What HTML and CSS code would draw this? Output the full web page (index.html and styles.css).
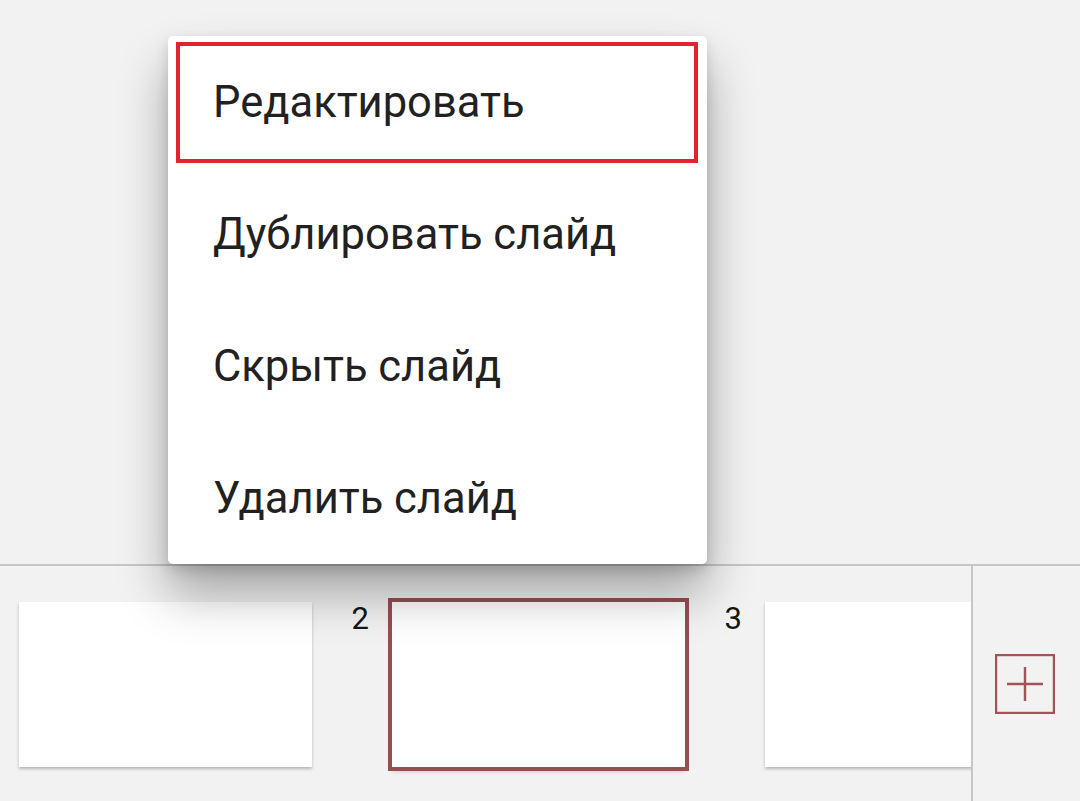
FILE: index.html
```html
<!DOCTYPE html>
<html lang="ru">
<head>
<meta charset="utf-8">
<link rel="stylesheet" href="styles.css">
</head>
<body>
<div class="screen">
  <div class="canvas">
    <ul class="menu">
      <li class="menu-item is-focused">Редактировать</li>
      <li class="menu-item">Дублировать слайд</li>
      <li class="menu-item">Скрыть слайд</li>
      <li class="menu-item">Удалить слайд</li>
    </ul>
  </div>
  <div class="bottom-bar">
    <div class="strip">
      <div class="thumb"></div>
      <div class="num">2</div>
      <div class="thumb is-selected"></div>
      <div class="num">3</div>
      <div class="thumb"></div>
    </div>
    <div class="add-panel">
      <div class="add-btn">
        <svg width="60" height="60" viewBox="0 0 60 60">
          <rect x="1.1" y="1.1" width="57.8" height="57.8" fill="none" stroke="#a05457" stroke-width="2.2"/>
          <path d="M30 13V47M12 30H48" stroke="#a05457" stroke-width="2.4" fill="none"/>
        </svg>
      </div>
    </div>
  </div>
</div>
</body>
</html>
```
FILE: styles.css
```css
html, body {
  margin: 0;
  padding: 0;
  background: #f2f2f2;
  font-family: Roboto, "Noto Sans", sans-serif;
  color: #212121;
}
.screen {
  width: 1080px;
  height: 801px;
  overflow: hidden;
  display: flex;
  flex-direction: column;
}
.canvas {
  height: 564px;
  position: relative;
  z-index: 2;
}
.menu {
  position: absolute;
  left: 168px;
  top: 36px;
  width: 539px;
  margin: 0;
  padding: 0;
  list-style: none;
  background: #ffffff;
  border-radius: 5px;
  box-shadow: 0 30px 50px rgba(0, 0, 0, 0.32), 0 6px 14px rgba(0, 0, 0, 0.14);
}
.menu-item {
  height: 132px;
  display: flex;
  align-items: center;
  padding-left: 45px;
  font-size: 43.5px;
  position: relative;
  box-sizing: border-box;
}
.menu-item.is-focused::after {
  content: "";
  position: absolute;
  left: 8px;
  right: 9px;
  top: 6px;
  bottom: 5px;
  border: 4px solid #e2222c;
}
.bottom-bar {
  flex: 1;
  border-top: 2px solid #c6c6c6;
  display: flex;
  background: #f2f2f2;
}
.strip {
  flex: 1;
  display: flex;
  align-items: flex-start;
  padding: 36px 0 0 19px;
  overflow: hidden;
}
.thumb {
  flex: 0 0 293px;
  height: 165px;
  background: #ffffff;
  box-shadow: 0 2px 3px rgba(0, 0, 0, 0.25);
}
.thumb.is-selected {
  outline: 4px solid #944f52;
  box-shadow: 0 3px 5px rgba(0, 0, 0, 0.3);
}
.num {
  flex: 0 0 80px;
  box-sizing: border-box;
  text-align: right;
  padding-right: 23px;
  font-size: 31px;
  line-height: 34px;
  color: #151515;
}
.add-panel {
  flex: 0 0 109px;
  box-sizing: border-box;
  border-left: 2px solid #c6c6c6;
  display: flex;
  align-items: center;
  justify-content: center;
  padding-right: 3px;
}
.add-btn {
  width: 60px;
  height: 60px;
  display: flex;
}
.add-btn svg {
  width: 60px;
  height: 60px;
}
```
